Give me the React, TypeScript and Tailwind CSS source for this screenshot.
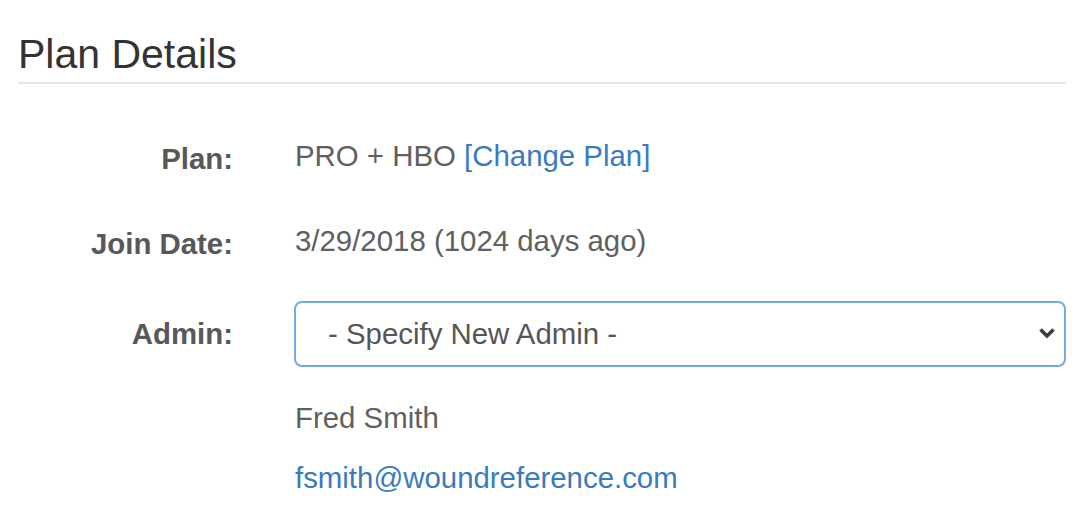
export default function App() {
    return (
        <div className="w-[1088px] h-[514px] bg-white px-[18px] font-['Liberation_Sans',Arial,sans-serif] text-[#606060] overflow-hidden">
            <h3 className="mt-[30px] pb-[4px] text-[41px] leading-[48px] text-[#333] border-b-2 border-[#e6e6e6] mr-[4px]">
                Plan Details
            </h3>

            <div className="text-[29.4px] leading-[42px]">
                {/* Plan */}
                <div className="flex mt-[51px]">
                    <div className="w-[215px] h-[42px] shrink-0 text-right font-bold text-[#585858] pt-[3px]">Plan:</div>
                    <div className="ml-[62px]">
                        PRO + HBO <a href="#" className="text-[#3a7bbf]">[Change Plan]</a>
                    </div>
                </div>

                {/* Join date */}
                <div className="flex mt-[43px]">
                    <div className="w-[215px] h-[42px] shrink-0 text-right font-bold text-[#585858] pt-[3px]">Join Date:</div>
                    <div className="ml-[62px]">3/29/2018 (1024 days ago)</div>
                </div>

                {/* Admin */}
                <div className="flex items-center mt-[39px]">
                    <div className="w-[215px] shrink-0 text-right font-bold text-[#585858]">Admin:</div>
                    <div className="ml-[61px] relative w-[772px]">
                        <select
                            defaultValue=""
                            className="appearance-none w-full h-[66px] pl-[32px] pr-12 bg-white text-[#555] border-2 border-[#74aae2] rounded-[8px] outline-none"
                        >
                            <option value="">- Specify New Admin -</option>
                        </select>
                        <svg
                            className="absolute right-[10px] top-[26px] pointer-events-none"
                            width="18"
                            height="12"
                            viewBox="0 0 18 12"
                            fill="none"
                        >
                            <polyline points="2.5,2.5 9,9 15.5,2.5" stroke="#3d3d3d" strokeWidth="3.6" />
                        </svg>
                    </div>
                </div>

                <div className="ml-[277px] mt-[30px]">Fred Smith</div>
                <div className="ml-[277px] mt-[18px]">
                    <a href="#" className="text-[#3a7bbf]">fsmith@woundreference.com</a>
                </div>
            </div>
        </div>
    );
}
